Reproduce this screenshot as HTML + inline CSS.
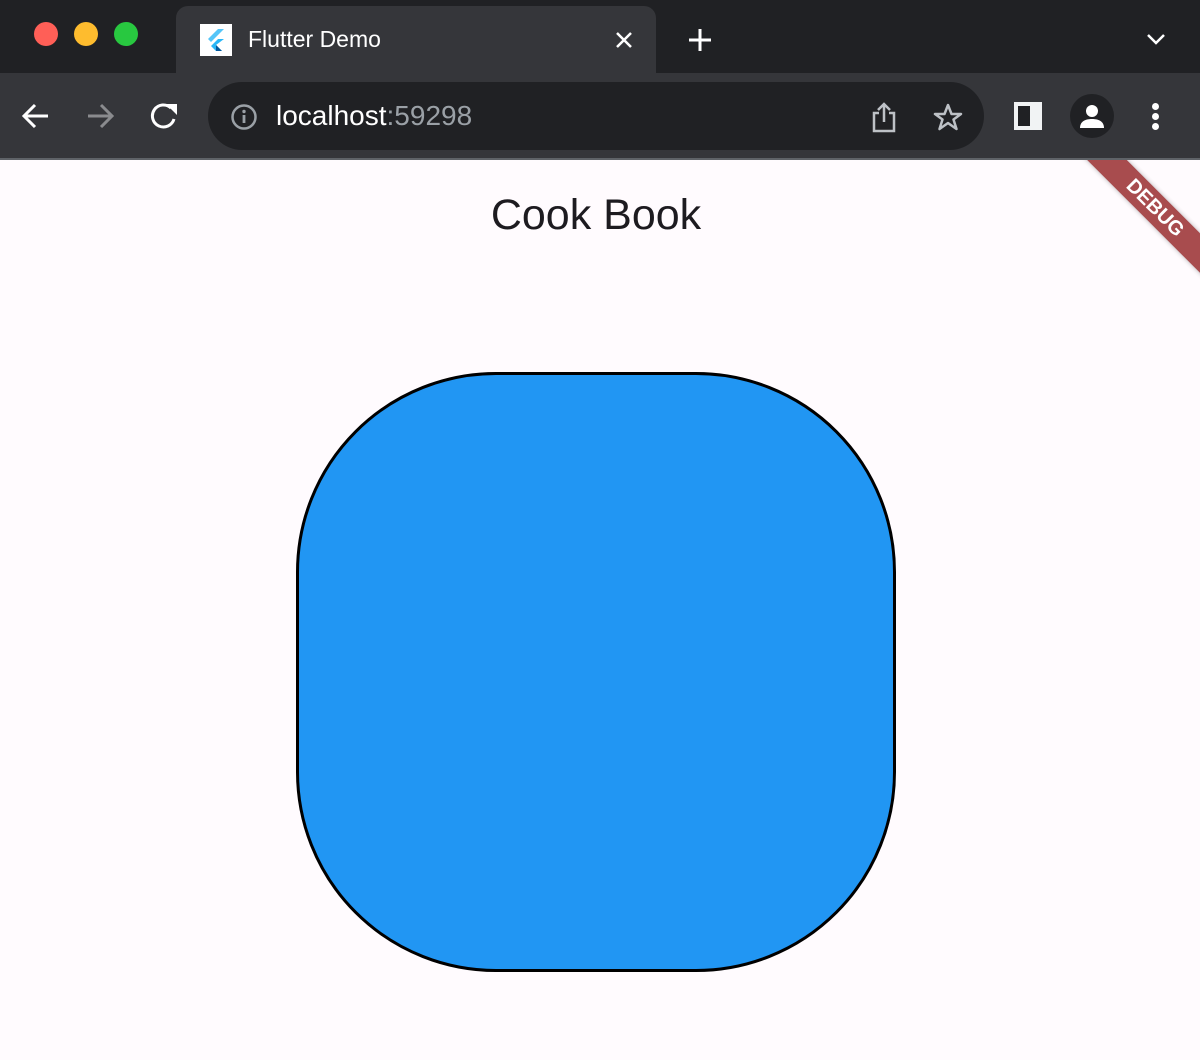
<!DOCTYPE html>
<html><head><meta charset="utf-8"><style>
*{margin:0;padding:0;box-sizing:border-box}
body{width:1200px;height:1060px;background:#fffbfe;font-family:"Liberation Sans",sans-serif;position:relative;overflow:hidden}
.tabbar{position:absolute;left:0;top:0;width:1200px;height:73px;background:#202124}
.dot{position:absolute;top:22px;width:24px;height:24px;border-radius:50%}
.tab{position:absolute;left:176px;top:6px;width:480px;height:67px;background:#35363a;border-radius:12px 12px 0 0}
.toolbar{position:absolute;left:0;top:73px;width:1200px;height:87px;background:#35363a;border-bottom:2px solid #5f6368}
.omni{position:absolute;left:208px;top:9px;width:776px;height:68px;background:#202124;border-radius:34px}
.shape{position:absolute;left:296px;top:372px;width:600px;height:600px;background:#2196f3;border:3.5px solid #000;border-radius:200px}
.clip{position:absolute;left:0;top:160px;width:1200px;height:900px;overflow:hidden}
.ribbon{position:absolute;left:1055px;top:34px;width:200px;height:28px;background:#a84c4e;transform:rotate(45deg);color:#fff;font-weight:bold;font-size:20px;text-align:center;line-height:28px;box-shadow:0 0 5px rgba(0,0,0,.3)}
</style></head><body>
<div class="tabbar">
<div class="dot" style="left:34px;background:#ff5f57"></div>
<div class="dot" style="left:74px;background:#febc2e"></div>
<div class="dot" style="left:114px;background:#28c840"></div>
<div class="tab">
<div style="position:absolute;left:24px;top:18px;width:32px;height:32px;background:#fff"></div>
<svg style="position:absolute;left:24px;top:18px" width="32" height="32" viewBox="0 0 32 32"><path d="M18 5 L8 15 L11 18 L24 5Z" fill="#54c5f8"/><path d="M18 15 L11 22 L16 27 L22 27 L16 21 L24 15Z" fill="#29b6f6"/><path d="M16 21 L19 24 L22 27 L16 27Z" fill="#01579b"/></svg>
<div style="position:absolute;left:72px;top:20px;color:#fff;font-size:23px">Flutter Demo</div>
<svg style="position:absolute;left:438px;top:24px" width="20" height="20" viewBox="0 0 20 20"><path d="M3 3L17 17M17 3L3 17" stroke="#fff" stroke-width="2.5"/></svg>
</div>
<svg style="position:absolute;left:686px;top:26px" width="28" height="28" viewBox="0 0 28 28"><path d="M14 3V25M3 14H25" stroke="#fff" stroke-width="3"/></svg>
<svg style="position:absolute;left:1145px;top:32px" width="22" height="14" viewBox="0 0 22 14"><path d="M3 3L11 11L19 3" stroke="#fff" stroke-width="2.5" fill="none"/></svg>
</div>
<div class="toolbar">
<svg style="position:absolute;left:20px;top:28px" width="32" height="30" viewBox="0 0 32 30"><path d="M28 15H5M15 4L4 15L15 26" stroke="#fff" stroke-width="3" fill="none"/></svg>
<svg style="position:absolute;left:84px;top:28px" width="32" height="30" viewBox="0 0 32 30"><path d="M4 15H27M17 4L28 15L17 26" stroke="#8a8b8e" stroke-width="3" fill="none"/></svg>
<svg style="position:absolute;left:148px;top:27px" width="34" height="32" viewBox="0 0 34 32"><path d="M26 19A11 11 0 1 1 23 8" stroke="#fff" stroke-width="3" fill="none"/><path d="M18 4H29V15Z" fill="#fff"/></svg>
<div class="omni">
<svg style="position:absolute;left:22px;top:21px" width="28" height="28" viewBox="0 0 28 28"><circle cx="14" cy="14" r="11.5" stroke="#9aa0a6" stroke-width="2.5" fill="none"/><path d="M14 12V20" stroke="#9aa0a6" stroke-width="2.8"/><circle cx="14" cy="8.5" r="1.7" fill="#9aa0a6"/></svg>
<div style="position:absolute;left:68px;top:18px;font-size:28px;color:#fff">localhost<span style="color:#9aa0a6">:59298</span></div>
<svg style="position:absolute;left:662px;top:19px" width="28" height="34" viewBox="0 0 28 34"><path d="M9 12H4V30H24V12H19M14 21V3M8 9L14 3L20 9" stroke="#bdc1c6" stroke-width="2.5" fill="none"/></svg>
<svg style="position:absolute;left:724px;top:20px" width="32" height="30" viewBox="0 0 32 30"><path d="M16 3L19.5 12H29L21.5 17.5L24.5 27L16 21L7.5 27L10.5 17.5L3 12H12.5Z" stroke="#bdc1c6" stroke-width="2.5" fill="none" stroke-linejoin="round"/></svg>
</div>
<div style="position:absolute;left:1014px;top:29px;width:28px;height:28px;background:#f1f3f4"></div>
<div style="position:absolute;left:1018px;top:33px;width:12px;height:20px;background:#202124"></div>
<div style="position:absolute;left:1070px;top:21px;width:44px;height:44px;border-radius:50%;background:#202124"></div>
<svg style="position:absolute;left:1078px;top:29px" width="28" height="28" viewBox="0 0 28 28"><circle cx="14" cy="9" r="6" fill="#fff"/><path d="M2 26C2 19 8 17 14 17S26 19 26 26Z" fill="#fff"/></svg>
<div style="position:absolute;left:1152px;top:30px;width:7px;height:7px;border-radius:50%;background:#fff;box-shadow:0 10px 0 #fff,0 20px 0 #fff"></div>
</div>
<div style="position:absolute;left:0;top:191px;width:1192px;text-align:center;font-size:43px;color:#1d1b20">Cook Book</div>
<div class="shape"></div>
<div class="clip"><div class="ribbon">DEBUG</div></div>
</body></html>
